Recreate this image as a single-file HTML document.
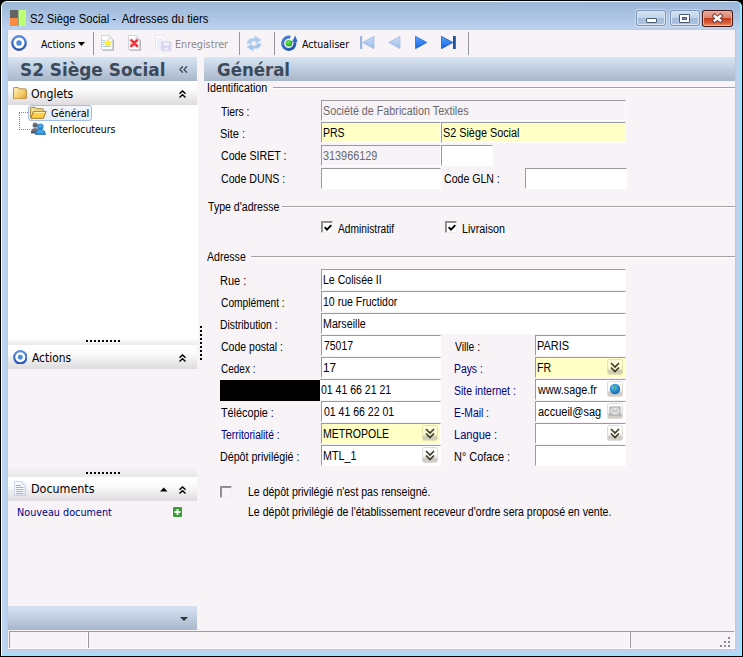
<!DOCTYPE html>
<html lang="fr"><head><meta charset="utf-8"><title>S2 Siège Social - Adresses du tiers</title>
<style>
html,body{margin:0;padding:0;background:#000;}
body{width:743px;height:657px;overflow:hidden;position:relative;font-family:"Liberation Sans",sans-serif;font-size:12px;}
div,span,svg{position:absolute;box-sizing:border-box;}
.t{white-space:pre;line-height:20px;height:20px;transform-origin:0 50%;}
.ms{font-family:"Liberation Sans",sans-serif;font-size:12px;}
.ti{font-family:"Liberation Sans",sans-serif;font-size:12px;}
.th{font-family:"DejaVu Sans Condensed","DejaVu Sans",sans-serif;font-size:11px;}
.th12{font-family:"DejaVu Sans Condensed","DejaVu Sans",sans-serif;font-size:12px;}
.hb{font-family:"DejaVu Sans",sans-serif;font-size:18px;font-weight:bold;}
.f{border-top:1px solid #9c9a9c;border-left:1px solid #9c9a9c;border-right:1px solid #fff;border-bottom:1px solid #fff;background:#fff;height:21px;}
.y{background:#ffffc6;}
.g{background:#f7f3f7;}
.hl{height:2px;border-top:1px solid #a5a2a5;border-bottom:1px solid #fff;}
.sec{left:8px;width:189px;height:24px;background:linear-gradient(#ffffff 0%,#fbfbfb 35%,#dedbde 100%);}
.sep{width:1px;top:32px;height:23px;background:#9496a5;}
.dot{width:2px;height:2px;background:#000;}
.cb{width:12px;height:12px;border-top:1px solid #8c8a8c;border-left:1px solid #8c8a8c;border-right:1px solid #efefef;border-bottom:1px solid #efefef;background:#fff;}
.cb i{position:absolute;left:0;top:0;width:10px;height:10px;border-top:1px solid #949294;border-left:1px solid #949294;box-sizing:border-box;}
.btn{width:16px;height:16px;border:1px solid #dedbd6;border-radius:2.5px;background:linear-gradient(#ffffff 0%,#f7f6f2 55%,#e7e5df 70%,#cbc9c1 74%,#d2d0c9 100%);}
.btn.yy{background:linear-gradient(#ffffde 0%,#fbfbce 55%,#ebe9c0 70%,#cbc9b1 74%,#d2d0b9 100%);border-color:#e3e1ad;}
</style></head>
<body>
<div style="left:0;top:0;width:743px;height:657px;background:#000;border-radius:7px 7px 0 0;"></div>
<div style="left:1px;top:1px;width:741px;height:655px;border-radius:6px 6px 0 0;background:linear-gradient(90deg,#fff 0,#f4faff 60%,#e7f5ff 97%,#b5e7ff 100%);"></div>
<div style="left:2px;top:2px;width:740px;height:654px;border-radius:5px 5px 0 0;background:#9ce3ff;"></div>
<div style="left:2px;top:2px;width:738px;height:652px;border-radius:5px 4px 0 0;background:linear-gradient(#9cb6d6 0px,#a5bede 8px,#b0c8e6 18px,#bdd3ef 28px,#bdd3ef 100%);"></div>
<div style="left:7px;top:29px;width:729px;height:621px;background:#bdcbde;"></div>
<div style="left:8px;top:30px;width:727px;height:619px;background:#f7f3f7;"></div>
<svg style="left:10px;top:10px" width="16" height="16" viewBox="0 0 16 16"><rect x="0" y="0" width="8.5" height="8" fill="#636563"/><rect x="0" y="8" width="8" height="8" fill="#ff8a42"/><rect x="8" y="8" width="1" height="8" fill="#6b6d63"/><rect x="8.6" y="0" width="7.4" height="16" fill="#bdff73"/></svg>
<div style="left:635px;top:9px;width:32px;height:18px;border-radius:4px;background:rgba(255,255,255,.38);"></div>
<div style="left:636px;top:10px;width:30px;height:16px;border-radius:3px;background:#7b94b7;"></div>
<div style="left:637px;top:11px;width:28px;height:14px;border-radius:2px;background:#dbe6f4;"></div>
<div style="left:638px;top:12px;width:26px;height:12px;border-radius:1px;background:linear-gradient(#cfdff1 0%,#c3d5eb 48%,#a3bbd9 50%,#adc4e1 100%);"></div>
<div style="left:668.5px;top:9px;width:32px;height:18px;border-radius:4px;background:rgba(255,255,255,.38);"></div>
<div style="left:669.5px;top:10px;width:30px;height:16px;border-radius:3px;background:#7b94b7;"></div>
<div style="left:670.5px;top:11px;width:28px;height:14px;border-radius:2px;background:#dbe6f4;"></div>
<div style="left:671.5px;top:12px;width:26px;height:12px;border-radius:1px;background:linear-gradient(#cfdff1 0%,#c3d5eb 48%,#a3bbd9 50%,#adc4e1 100%);"></div>
<div style="left:702px;top:10px;width:31px;height:17px;border-radius:3px;background:#42181a;"></div>
<div style="left:703px;top:11px;width:29px;height:15px;border-radius:2px;background:#f0b0a0;"></div>
<div style="left:704px;top:12px;width:27px;height:13px;border-radius:1px;background:linear-gradient(#e8a595 0%,#d98573 48%,#c63c1c 50%,#d8603c 85%,#e88a60 100%);"></div>
<div style="left:646px;top:18px;width:11px;height:5px;background:#fff;border:1px solid #4a5a70;border-radius:1px;"></div>
<div style="left:679px;top:14px;width:11px;height:9px;background:#fff;border:1px solid #4a5a70;border-radius:1px;"></div>
<div style="left:682px;top:17px;width:5px;height:3px;background:#8aa4c6;border:1px solid #4a5a70;"></div>
<svg style="left:710px;top:13px" width="15" height="11" viewBox="0 0 15 11"><g stroke-linecap="butt" fill="none"><path d="M2.900 1.700l9.200 7.100M12.100 1.700l-9.200 7.100" stroke="#6b3431" stroke-width="4.200"/><path d="M3.700 2.300l7.600 5.900M11.300 2.300l-7.600 5.900" stroke="#fff" stroke-width="2.500"/></g></svg>
<svg style="left:11px;top:35px" width="16" height="16" viewBox="0 0 16 16"><defs><linearGradient id="rg11" x1="0" y1="0" x2="0" y2="1"><stop offset="0" stop-color="#5a8ee0"/><stop offset="1" stop-color="#2a54b0"/></linearGradient></defs><circle cx="8" cy="8" r="6.7" fill="#fff" stroke="url(#rg11)" stroke-width="2.4"/><circle cx="8" cy="8" r="2.7" fill="#4a8ae0"/></svg>
<svg style="left:78px;top:42px" width="7" height="4" viewBox="0 0 7 4"><path d="M0 0h7L3.5 4z" fill="#000"/></svg>
<div class="sep" style="left:93px"></div>
<div class="sep" style="left:239px"></div>
<div class="sep" style="left:274px"></div>
<div class="sep" style="left:468px"></div>
<svg style="left:100px;top:33.5px;opacity:1" width="16" height="18" viewBox="0 0 16 18"><path d="M2.6 2.800h8l3.400 3.400v10.600H2.600z" fill="#9c9ea5" opacity=".75"/><path d="M1.500 1.500h7.700l3.300 3.300v10.700h-11z" fill="#fff" stroke="#ced3de" stroke-width="1"/><path d="M9.200 1.500v3.300h3.300" fill="#eff3ff" stroke="#c6cbd6" stroke-width=".8"/><path d="M2.500 6.500h3M2.500 8.500h2M2.500 10.500h2M2.500 12.500h8" stroke="#a5cbef" stroke-width="1"/><path d="M7.900 5.300l1.200 2.400 2.600.3-1.900 1.800.6 2.600-2.500-1.300-2.500 1.300.6-2.600-1.900-1.800 2.600-.3z" fill="#ffef31" stroke="#f7db42" stroke-width=".6"/></svg>
<svg style="left:127px;top:33.5px;opacity:1" width="16" height="18" viewBox="0 0 16 18"><path d="M2.6 2.800h8l3.400 3.400v10.600H2.600z" fill="#9c9ea5" opacity=".75"/><path d="M1.500 1.500h7.700l3.300 3.300v10.700h-11z" fill="#fff" stroke="#ced3de" stroke-width="1"/><path d="M9.200 1.500v3.300h3.300" fill="#eff3ff" stroke="#c6cbd6" stroke-width=".8"/><path d="M2.500 6.500h3M2.500 9.500h2M2.500 12.500h8" stroke="#bdcfe7" stroke-width="1"/><path d="M4.300 6.200l5.800 5.800M10.100 6.200l-5.800 5.800" stroke="#f7aaad" stroke-width="3.400" stroke-linecap="round"/><path d="M4.300 6.200l5.800 5.800M10.100 6.200l-5.800 5.800" stroke="#e72429" stroke-width="1.800" stroke-linecap="round"/></svg>
<svg style="left:154px;top:34px" width="18" height="18" viewBox="0 0 18 18"><path d="M1.500 1.500h7.500l3 3v10.500h-10.500z" fill="#fdfdff" stroke="#e7e7ef" stroke-width="1"/><path d="M3 5h6M3 7h7M3 9h5M3 11h4M3 13h4" stroke="#dee3f7" stroke-width="1"/><rect x="7.500" y="7.500" width="9.500" height="9.500" rx="1" fill="#d6d3ef" stroke="#dedbf3"/><rect x="9.500" y="8.500" width="5.500" height="3" fill="#f3f3ff"/><rect x="10" y="13.500" width="4.500" height="3" fill="#ebebfb"/></svg>
<svg style="left:245px;top:34.500px" width="18" height="17" viewBox="0 0 18 17"><path d="M1.800 8.300C2.200 4.600 5.600 2.900 9.300 3.500L9.800 .8l6.400 4.100-5.600 3.800.5-2.500C8.700 5.800 6.400 6.500 5.300 8.800z" fill="#adcbeb" stroke="#c6dbf3" stroke-width=".7"/><path d="M16.200 8.700C15.800 12.400 12.400 14.100 8.700 13.500L8.200 16.200 1.800 12.100l5.600-3.800-.5 2.500c2.400.4 4.700-.3 5.800-2.600z" fill="#a5c7e7" stroke="#c6dbf3" stroke-width=".7"/></svg>
<svg style="left:280px;top:34px" width="18" height="18" viewBox="0 0 18 18"><defs><linearGradient id="ag" x1="0" y1="0" x2="1" y2="1"><stop offset="0" stop-color="#4a82de"/><stop offset="1" stop-color="#214fa5"/></linearGradient><radialGradient id="gg" cx=".4" cy=".35" r=".7"><stop offset="0" stop-color="#73e763"/><stop offset="1" stop-color="#18a218"/></radialGradient></defs><path d="M10.300 3.300A6.200 6.200 0 1 0 14.900 8.300" fill="none" stroke="url(#ag)" stroke-width="3"/><path d="M11.800 8.400L17.600 7.800 15.200 1.600z" fill="#3169c6"/><circle cx="8.900" cy="9.200" r="3.300" fill="url(#gg)"/></svg>
<svg style="left:360px;top:35px" width="16" height="15" viewBox="0 0 16 15"><defs><linearGradient id="ng360" x1="0" y1="0" x2="0" y2="1"><stop offset="0" stop-color="#c6dbf7"/><stop offset="1" stop-color="#9cbee7"/></linearGradient></defs><rect x="0" y="1" width="2.2" height="13" fill="#9cb6de"/><path d="M14 1.300L2.600 7.500 14 13.700z" fill="url(#ng360)" stroke="#9cb6de" stroke-width=".7"/></svg>
<svg style="left:388px;top:35px" width="16" height="15" viewBox="0 0 16 15"><defs><linearGradient id="ng388" x1="0" y1="0" x2="0" y2="1"><stop offset="0" stop-color="#c6dbf7"/><stop offset="1" stop-color="#9cbee7"/></linearGradient></defs><path d="M12 1.300L.6 7.500 12 13.700z" fill="url(#ng388)" stroke="#a5bee0" stroke-width=".7"/></svg>
<svg style="left:415px;top:35px" width="16" height="15" viewBox="0 0 16 15"><defs><linearGradient id="ng415" x1="0" y1="0" x2="0" y2="1"><stop offset="0" stop-color="#5aa2ff"/><stop offset="1" stop-color="#1065e7"/></linearGradient></defs><path d="M.5 1.300L11.900 7.500.5 13.700z" fill="url(#ng415)" stroke="#2163c6" stroke-width=".7"/></svg>
<svg style="left:441px;top:35px" width="16" height="15" viewBox="0 0 16 15"><defs><linearGradient id="ng441" x1="0" y1="0" x2="0" y2="1"><stop offset="0" stop-color="#5aa2ff"/><stop offset="1" stop-color="#1065e7"/></linearGradient></defs><path d="M.5 1.300L11.900 7.500.5 13.700z" fill="url(#ng441)" stroke="#21519c" stroke-width=".7"/><rect x="12" y="1" width="2.800" height="13" fill="#21519c"/></svg>
<div style="left:8px;top:57px;width:189px;height:24px;background:linear-gradient(#d9e5f3 0%,#c3d0e2 45%,#a8b6ca 100%);"></div>
<div style="left:204px;top:57px;width:531px;height:24px;background:linear-gradient(#d9e5f3 0%,#c3d0e2 45%,#a8b6ca 100%);"></div>
<svg style="left:179px;top:66px" width="9" height="7" viewBox="0 0 9 7"><path d="M3.800 .3L.8 3.500l3 3.200M8 .3L5 3.500l3 3.200" fill="none" stroke="#3a4654" stroke-width="1.300"/></svg>
<div class="sec" style="left:8px;top:81px;width:189px;height:24px;"></div>
<div style="left:8px;top:105px;width:190px;height:233px;background:#fff;"></div>
<div style="left:8px;top:338px;width:190px;height:7px;background:linear-gradient(#fff,#ebebeb);"></div>
<div class="sec" style="left:8px;top:345px;width:189px;height:24px;"></div>
<div style="left:8px;top:467px;width:189px;height:10px;background:linear-gradient(#f7f3f7,#e7e7e7);"></div>
<div class="sec" style="left:8px;top:477px;width:189px;height:24px;"></div>
<div style="left:8px;top:606px;width:189px;height:24px;background:linear-gradient(#d6e2f2 0%,#c0cde0 50%,#a9b6c8 100%);"></div>
<svg style="left:180px;top:617px" width="8" height="4" viewBox="0 0 8 4"><path d="M0 0h8L4 4z" fill="#31353a"/></svg>
<div class="dot" style="left:86px;top:340px"></div>
<div class="dot" style="left:90px;top:340px"></div>
<div class="dot" style="left:94px;top:340px"></div>
<div class="dot" style="left:98px;top:340px"></div>
<div class="dot" style="left:102px;top:340px"></div>
<div class="dot" style="left:106px;top:340px"></div>
<div class="dot" style="left:110px;top:340px"></div>
<div class="dot" style="left:114px;top:340px"></div>
<div class="dot" style="left:118px;top:340px"></div>
<div class="dot" style="left:86px;top:472px"></div>
<div class="dot" style="left:90px;top:472px"></div>
<div class="dot" style="left:94px;top:472px"></div>
<div class="dot" style="left:98px;top:472px"></div>
<div class="dot" style="left:102px;top:472px"></div>
<div class="dot" style="left:106px;top:472px"></div>
<div class="dot" style="left:110px;top:472px"></div>
<div class="dot" style="left:114px;top:472px"></div>
<div class="dot" style="left:118px;top:472px"></div>
<div class="dot" style="left:200px;top:326px"></div>
<div class="dot" style="left:200px;top:330px"></div>
<div class="dot" style="left:200px;top:334px"></div>
<div class="dot" style="left:200px;top:338px"></div>
<div class="dot" style="left:200px;top:342px"></div>
<div class="dot" style="left:200px;top:346px"></div>
<div class="dot" style="left:200px;top:350px"></div>
<div class="dot" style="left:200px;top:354px"></div>
<div class="dot" style="left:200px;top:358px"></div>
<svg style="left:179px;top:90px" width="7" height="8" viewBox="0 0 7 8"><path d="M.5 3.700L3.500 .9 6.500 3.700M.5 7.500L3.500 4.700 6.500 7.500" fill="none" stroke="#000" stroke-width="1.400"/></svg>
<svg style="left:179px;top:354px" width="7" height="8" viewBox="0 0 7 8"><path d="M.5 3.700L3.500 .9 6.500 3.700M.5 7.500L3.500 4.700 6.500 7.500" fill="none" stroke="#000" stroke-width="1.400"/></svg>
<svg style="left:179px;top:486px" width="7" height="8" viewBox="0 0 7 8"><path d="M.5 3.700L3.500 .9 6.500 3.700M.5 7.500L3.500 4.700 6.500 7.500" fill="none" stroke="#000" stroke-width="1.400"/></svg>
<svg style="left:160px;top:487px" width="8" height="5" viewBox="0 0 8 5"><path d="M0 4.500h7.500L3.750 .5z" fill="#000"/></svg>
<svg style="left:13px;top:85.500px" width="14" height="13.500" viewBox="0 0 15 14" preserveAspectRatio="none"><defs><linearGradient id="fo" x1="0" y1="0" x2="1" y2="1"><stop offset="0" stop-color="#fff3c6"/><stop offset=".5" stop-color="#f7d373"/><stop offset="1" stop-color="#e0a431"/></linearGradient></defs><path d="M.5 2.500a1 1 0 0 1 1-1h4l1 1.500h7a.8.8 0 0 1 .8.800V12.500a.8.8 0 0 1-.8.800H1.300a.8.8 0 0 1-.8-.8z" fill="url(#fo)" stroke="#ad8639" stroke-width="1"/></svg>
<div style="left:28px;top:105px;width:64px;height:16px;background:linear-gradient(#f3f7fd,#e3ecfa);border:1px solid #a5bde7;border-radius:3px;"></div>
<div style="left:19px;top:112px;width:1px;height:18px;border-left:1px dotted #848284;"></div>
<div style="left:19px;top:112px;width:9px;height:1px;border-top:1px dotted #848284;"></div>
<div style="left:19px;top:129px;width:11px;height:1px;border-top:1px dotted #848284;"></div>
<svg style="left:30px;top:106px" width="17" height="13" viewBox="0 0 17 13"><path d="M.6 11.500V2.200a.8.8 0 0 1 .8-.8h3.800l1 1.400h6.300a.8.8 0 0 1 .8.800v1.500" fill="#f7e39c" stroke="#a57d21" stroke-width="1"/><path d="M.8 12.300L3.600 5.400h12.600L13.300 12.300z" fill="#ffcf4a" stroke="#a57d21" stroke-width="1"/><path d="M4.300 6.400h10.500" stroke="#fff3b5" stroke-width="1"/></svg>
<svg style="left:30px;top:122px" width="16" height="13" viewBox="0 0 16 13"><defs><linearGradient id="pg" x1="0" y1="0" x2="0" y2="1"><stop offset="0" stop-color="#7b8494"/><stop offset="1" stop-color="#4a505a"/></linearGradient><linearGradient id="pb" x1="0" y1="0" x2="0" y2="1"><stop offset="0" stop-color="#5abaf7"/><stop offset="1" stop-color="#2186d6"/></linearGradient></defs><circle cx="5.200" cy="3" r="2.600" fill="url(#pg)"/><path d="M.8 11.500C.8 7.800 2.400 6.100 5.200 6.100s4.400 1.700 4.400 5.400z" fill="url(#pg)"/><circle cx="10.400" cy="4.700" r="2.800" fill="url(#pb)" stroke="#18619c" stroke-width=".7"/><path d="M5.400 12.600c0-3.400 1.900-5 5-5s5 1.600 5 5z" fill="url(#pb)" stroke="#18619c" stroke-width=".7"/></svg>
<svg style="left:12.6px;top:349.5px" width="14.6" height="14.6" viewBox="0 0 16 16"><defs><linearGradient id="rg12.6" x1="0" y1="0" x2="0" y2="1"><stop offset="0" stop-color="#5a8ee0"/><stop offset="1" stop-color="#2a54b0"/></linearGradient></defs><circle cx="8" cy="8" r="6.7" fill="#fff" stroke="url(#rg12.6)" stroke-width="2.4"/><circle cx="8" cy="8" r="2.7" fill="#4a8ae0"/></svg>
<svg style="left:13px;top:481px" width="14" height="16" viewBox="0 0 14 16"><path d="M2 2h8l3 3v10H2z" fill="#b5b6bd" opacity=".6"/><path d="M1.500 .5h7.500l3 3v10.500h-10.500z" fill="#f7fbff" stroke="#ced7ef" stroke-width="1"/><path d="M9 .5v3h3" fill="#e7efff" stroke="#ced7ef" stroke-width=".8"/><path d="M3 4.500h5M3 6.500h7.500M3 8.500h7.500M3 10.500h7.500M3 12.500h7.500" stroke="#8cb2ff" stroke-width="1"/></svg>
<svg style="left:173px;top:507px" width="9" height="10" viewBox="0 0 9 10"><rect x="0" y="0" width="9" height="10" rx="1.200" fill="#399e39"/><path d="M4.500 2v6M1.500 5h6" stroke="#fff" stroke-width="1.800"/></svg>
<div style="left:9px;top:631px;width:725px;height:1px;background:#9c9a9c;"></div>
<div style="left:9px;top:648px;width:726px;height:1px;background:#fff;"></div>
<div style="left:9px;top:631px;width:1px;height:17px;background:#9c9a9c;"></div>
<div style="left:88px;top:631px;width:1px;height:17px;background:#9c9a9c;"></div>
<div style="left:630px;top:631px;width:1px;height:17px;background:#9c9a9c;"></div>
<div style="left:87px;top:632px;width:1px;height:17px;background:#fff;"></div>
<div style="left:629px;top:632px;width:1px;height:17px;background:#fff;"></div>
<div style="left:734px;top:632px;width:1px;height:17px;background:#fff;"></div>
<div style="left:728px;top:637px;width:2px;height:2px;background:#8c8a8c;"></div>
<div style="left:724px;top:641px;width:2px;height:2px;background:#8c8a8c;"></div>
<div style="left:728px;top:641px;width:2px;height:2px;background:#8c8a8c;"></div>
<div style="left:720px;top:645px;width:2px;height:2px;background:#8c8a8c;"></div>
<div style="left:724px;top:645px;width:2px;height:2px;background:#8c8a8c;"></div>
<div style="left:728px;top:645px;width:2px;height:2px;background:#8c8a8c;"></div>
<div class="hl" style="left:273px;top:87px;width:462px"></div>
<div class="hl" style="left:282px;top:206px;width:453px"></div>
<div class="hl" style="left:251px;top:256px;width:484px"></div>
<div class="f g" style="left:321px;top:100px;width:305px"></div>
<div class="f y" style="left:321px;top:122px;width:120px"></div>
<div class="f y" style="left:441px;top:122px;width:185px"></div>
<div class="f g" style="left:321px;top:145px;width:120px"></div>
<div class="f " style="left:441px;top:145px;width:52px"></div>
<div class="f " style="left:321px;top:168px;width:120px"></div>
<div class="f " style="left:525px;top:168px;width:102px"></div>
<div class="f " style="left:321px;top:269px;width:305px"></div>
<div class="f " style="left:321px;top:291px;width:305px"></div>
<div class="f " style="left:321px;top:313px;width:305px"></div>
<div class="f " style="left:321px;top:335px;width:120px"></div>
<div class="f " style="left:321px;top:357px;width:120px"></div>
<div class="f " style="left:321px;top:401px;width:120px"></div>
<div class="f " style="left:321px;top:445px;width:120px"></div>
<div class="f" style="left:320px;top:379px;width:121px;border-left:none"></div>
<div class="f y" style="left:321px;top:423px;width:120px"></div>
<div class="f " style="left:535px;top:335px;width:91px"></div>
<div class="f " style="left:535px;top:379px;width:91px"></div>
<div class="f " style="left:535px;top:401px;width:91px"></div>
<div class="f " style="left:535px;top:423px;width:91px"></div>
<div class="f " style="left:535px;top:445px;width:91px"></div>
<div class="f y" style="left:535px;top:357px;width:91px"></div>
<div style="left:220px;top:380px;width:100px;height:21px;background:#000;"></div>
<div class="cb" style="left:321px;top:221px;background:#fff"><i></i><svg style="left:2px;top:2px" width="8" height="8" viewBox="0 0 8 8"><path d="M.7 3.200L3 5.600 7.300 1.200" fill="none" stroke="#000" stroke-width="1.900"/></svg></div>
<div class="cb" style="left:445px;top:221px;background:#fff"><i></i><svg style="left:2px;top:2px" width="8" height="8" viewBox="0 0 8 8"><path d="M.7 3.200L3 5.600 7.300 1.200" fill="none" stroke="#000" stroke-width="1.900"/></svg></div>
<div class="cb" style="left:220px;top:486px;background:#f7f3f7"><i></i></div>
<div class="btn yy" style="left:607px;top:359px"><svg style="left:2px;top:2px" width="10" height="11" viewBox="0 0 10 11"><path d="M1 1l4 4 4-4M1 5.500l4 4 4-4" fill="none" stroke="#393c29" stroke-width="1.600"/></svg></div>
<div class="btn yy" style="left:422px;top:425px"><svg style="left:2px;top:2px" width="10" height="11" viewBox="0 0 10 11"><path d="M1 1l4 4 4-4M1 5.500l4 4 4-4" fill="none" stroke="#393c29" stroke-width="1.600"/></svg></div>
<div class="btn" style="left:422px;top:447px"><svg style="left:2px;top:2px" width="10" height="11" viewBox="0 0 10 11"><path d="M1 1l4 4 4-4M1 5.500l4 4 4-4" fill="none" stroke="#393c29" stroke-width="1.600"/></svg></div>
<div class="btn" style="left:607px;top:425px"><svg style="left:2px;top:2px" width="10" height="11" viewBox="0 0 10 11"><path d="M1 1l4 4 4-4M1 5.500l4 4 4-4" fill="none" stroke="#393c29" stroke-width="1.600"/></svg></div>
<div class="btn" style="left:607px;top:381px"><svg style="left:1px;top:1px" width="12" height="12" viewBox="0 0 12 12"><defs><radialGradient id="gl" cx=".4" cy=".35" r=".75"><stop offset="0" stop-color="#6bc7f7"/><stop offset=".6" stop-color="#2182c6"/><stop offset="1" stop-color="#105d9c"/></radialGradient></defs><circle cx="6" cy="6" r="5.200" fill="url(#gl)"/><path d="M4 2.500l2 1-1 2 1.500 1" fill="none" stroke="#39a263" stroke-width="1"/></svg></div>
<div class="btn" style="left:607px;top:403px"><svg style="left:1px;top:2px" width="12" height="10" viewBox="0 0 12 10"><rect x="1" y="1" width="10" height="8" fill="#e7e7e7" stroke="#a5a2a5" stroke-width="1"/><path d="M1 1l5 4.500L11 1M1 9l3.800-4M11 9L7.200 5" fill="none" stroke="#a5a2a5" stroke-width=".8"/></svg></div>
<span class="t ti" style="left:29.5px;top:9px;color:#000;transform:scaleX(0.9352)">S2 Siège Social -  Adresses du tiers</span>
<span class="t th" style="left:41.0px;top:35px;color:#000;transform:scaleX(0.9491)">Actions</span>
<span class="t th" style="left:175.0px;top:35px;color:#8c8a8c;transform:scaleX(0.9728)">Enregistrer</span>
<span class="t th" style="left:301.5px;top:35px;color:#000;transform:scaleX(0.9603)">Actualiser</span>
<span class="t hb" style="left:19.7px;top:60px;color:#3b4a5a;transform:scaleX(0.9392)">S2 Siège Social</span>
<span class="t hb" style="left:216.6px;top:60px;color:#3b4a5a;transform:scaleX(0.9224)">Général</span>
<span class="t th12" style="left:31.0px;top:84px;color:#000;transform:scaleX(1.0151)">Onglets</span>
<span class="t th" style="left:50.7px;top:104px;color:#000;transform:scaleX(0.9817)">Général</span>
<span class="t th" style="left:50.0px;top:120px;color:#000;transform:scaleX(0.9454)">Interlocuteurs</span>
<span class="t th12" style="left:32.1px;top:348px;color:#000;transform:scaleX(0.9918)">Actions</span>
<span class="t th12" style="left:30.5px;top:479px;color:#000;transform:scaleX(1.0319)">Documents</span>
<span class="t th" style="left:17.3px;top:503px;color:#000084;transform:scaleX(0.9765)">Nouveau document</span>
<span class="t ms" style="left:206.8px;top:78px;color:#000;transform:scaleX(0.8936)">Identification</span>
<span class="t ms" style="left:221.1px;top:102px;color:#000;transform:scaleX(0.8670)">Tiers :</span>
<span class="t ms" style="left:220.1px;top:124px;color:#000;transform:scaleX(0.9182)">Site :</span>
<span class="t ms" style="left:221.1px;top:146px;color:#000;transform:scaleX(0.8875)">Code SIRET :</span>
<span class="t ms" style="left:221.1px;top:169px;color:#000;transform:scaleX(0.8844)">Code DUNS :</span>
<span class="t ms" style="left:443.5px;top:169px;color:#000;transform:scaleX(0.8807)">Code GLN :</span>
<span class="t ms" style="left:322.6px;top:101px;color:#6b696b;transform:scaleX(0.8958)">Société de Fabrication Textiles</span>
<span class="t ms" style="left:323.0px;top:123px;color:#000;transform:scaleX(0.8741)">PRS</span>
<span class="t ms" style="left:442.5px;top:123px;color:#000;transform:scaleX(0.9019)">S2 Siège Social</span>
<span class="t ms" style="left:323.0px;top:146px;color:#6b696b;transform:scaleX(0.9042)">313966129</span>
<span class="t ms" style="left:207.8px;top:197px;color:#000;transform:scaleX(0.8813)">Type d&#x27;adresse</span>
<span class="t ms" style="left:338.1px;top:219px;color:#000;transform:scaleX(0.8511)">Administratif</span>
<span class="t ms" style="left:462.1px;top:219px;color:#000;transform:scaleX(0.8952)">Livraison</span>
<span class="t ms" style="left:206.7px;top:247px;color:#000;transform:scaleX(0.8812)">Adresse</span>
<span class="t ms" style="left:219.8px;top:271px;color:#000;transform:scaleX(0.9127)">Rue :</span>
<span class="t ms" style="left:220.8px;top:293px;color:#000;transform:scaleX(0.8528)">Complément :</span>
<span class="t ms" style="left:219.8px;top:315px;color:#000;transform:scaleX(0.8640)">Distribution :</span>
<span class="t ms" style="left:220.8px;top:337px;color:#000;transform:scaleX(0.8755)">Code postal :</span>
<span class="t ms" style="left:220.8px;top:359px;color:#000;transform:scaleX(0.8342)">Cedex :</span>
<span class="t ms" style="left:220.8px;top:403px;color:#000;transform:scaleX(0.8997)">Télécopie :</span>
<span class="t ms" style="left:220.8px;top:425px;color:#000084;transform:scaleX(0.8531)">Territorialité :</span>
<span class="t ms" style="left:219.8px;top:447px;color:#000;transform:scaleX(0.8886)">Dépôt privilégié :</span>
<span class="t ms" style="left:323.0px;top:270px;color:#000;transform:scaleX(0.8794)">Le Colisée II</span>
<span class="t ms" style="left:323.0px;top:292px;color:#000;transform:scaleX(0.8774)">10 rue Fructidor</span>
<span class="t ms" style="left:323.0px;top:314px;color:#000;transform:scaleX(0.8889)">Marseille</span>
<span class="t ms" style="left:324.0px;top:336px;color:#000;transform:scaleX(0.8689)">75017</span>
<span class="t ms" style="left:323.0px;top:358px;color:#000;transform:scaleX(0.9759)">17</span>
<span class="t ms" style="left:320.9px;top:380px;color:#000;transform:scaleX(0.8766)">01 41 66 21 21</span>
<span class="t ms" style="left:323.5px;top:402px;color:#000;transform:scaleX(0.8766)">01 41 66 22 01</span>
<span class="t ms" style="left:323.0px;top:424px;color:#000;transform:scaleX(0.8760)">METROPOLE</span>
<span class="t ms" style="left:323.0px;top:446px;color:#000;transform:scaleX(0.8925)">MTL_1</span>
<span class="t ms" style="left:454.6px;top:337px;color:#000;transform:scaleX(0.8594)">Ville :</span>
<span class="t ms" style="left:453.6px;top:359px;color:#000084;transform:scaleX(0.8623)">Pays :</span>
<span class="t ms" style="left:453.6px;top:381px;color:#000084;transform:scaleX(0.8743)">Site internet :</span>
<span class="t ms" style="left:453.6px;top:403px;color:#000084;transform:scaleX(0.8595)">E-Mail :</span>
<span class="t ms" style="left:453.6px;top:425px;color:#000084;transform:scaleX(0.9226)">Langue :</span>
<span class="t ms" style="left:453.6px;top:447px;color:#000;transform:scaleX(0.9119)">N° Coface :</span>
<span class="t ms" style="left:537.4px;top:336px;color:#000;transform:scaleX(0.9149)">PARIS</span>
<span class="t ms" style="left:537.4px;top:358px;color:#000;transform:scaleX(0.8811)">FR</span>
<span class="t ms" style="left:538.4px;top:380px;color:#000;transform:scaleX(0.8996)">www.sage.fr</span>
<span class="t ms" style="left:538.4px;top:402px;color:#000;transform:scaleX(0.9174)">accueil@sag</span>
<span class="t ms" style="left:247.9px;top:482px;color:#000;transform:scaleX(0.8775)">Le dépôt privilégié n&#x27;est pas renseigné.</span>
<span class="t ms" style="left:247.9px;top:502px;color:#000;transform:scaleX(0.8803)">Le dépôt privilégié de l&#x27;établissement receveur d&#x27;ordre sera proposé en vente.</span>
</body></html>
